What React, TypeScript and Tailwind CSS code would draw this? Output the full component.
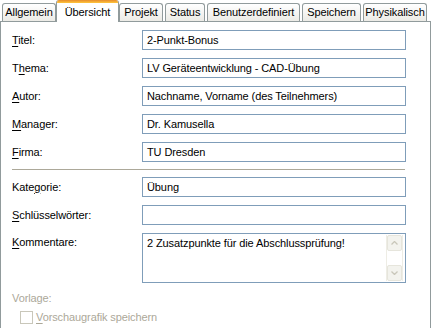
import React from 'react';

const tabs = [
  { label: 'Allgemein', w: 'w-[54px]' },
  { label: 'Übersicht', w: 'w-[63px]', active: true },
  { label: 'Projekt', w: 'w-[44px]' },
  { label: 'Status', w: 'w-[40px]' },
  { label: 'Benutzerdefiniert', w: 'w-[93px]' },
  { label: 'Speichern', w: 'w-[59px]' },
  { label: 'Physikalisch', w: 'w-[64px]' },
];

function Label({ pre, u, post, disabled }: { pre?: string; u: string; post: string; disabled?: boolean }) {
  return (
    <span className={disabled ? 'text-[#aca899]' : 'text-black'}>
      {pre}
      <span className="underline underline-offset-2">{u}</span>
      {post}
    </span>
  );
}

function Field({ label, value }: { label: React.ReactNode; value: string }) {
  return (
    <div className="flex h-[20px] items-center leading-[13px]">
      <div className="w-[130px]">{label}</div>
      <div className="h-[20px] w-[264px] border border-[#7f9db9] bg-white pl-[4px] leading-[18px]">{value}</div>
    </div>
  );
}

export default function App() {
  return (
    <div
      className="w-[432px] h-[328px] overflow-hidden bg-white text-[11px] leading-[13px] tracking-[-0.1px] text-black"
      style={{ fontFamily: '"Liberation Sans", Arial, sans-serif' }}
    >
      {/* Tab strip */}
      <div className="flex items-end h-[21px] pl-[2px] gap-[2px] relative z-10">
        {tabs.map((t) =>
          t.active ? (
            <div
              key={t.label}
              className={`${t.w} -mx-[2px] h-[22px] -mb-px bg-white border-x border-[#919b9c] rounded-t-[3px] overflow-hidden flex flex-col`}
            >
              <div className="h-[3px] bg-gradient-to-b from-[#e68b2c] to-[#ffc73c] shrink-0" />
              <div className="flex-1 text-center leading-[16px] pt-px">{t.label}</div>
            </div>
          ) : (
            <div
              key={t.label}
              className={`${t.w} h-[18px] border border-b-0 border-[#919b9c] rounded-t-[3px] bg-gradient-to-b from-white to-[#ecebe6] text-center leading-[17px]`}
            >
              {t.label}
            </div>
          )
        )}
      </div>

      {/* Panel */}
      <div className="h-[307px] w-[431px] border border-[#919b9c] border-b-0 bg-white pl-[11px] pt-[8px]">
        <div className="flex flex-col gap-[8px]">
          <Field label={<Label u="T" post="itel:" />} value="2-Punkt-Bonus" />
          <Field label={<Label pre="T" u="h" post="ema:" />} value="LV Geräteentwicklung - CAD-Übung" />
          <Field label={<Label u="A" post="utor:" />} value="Nachname, Vorname (des Teilnehmers)" />
          <Field label={<Label u="M" post="anager:" />} value="Dr. Kamusella" />
          <Field label={<Label u="F" post="irma:" />} value="TU Dresden" />
        </div>

        <div className="h-px w-[393px] bg-[#aca899] mt-[7px] mb-[7px]" />

        <div className="flex flex-col gap-[8px]">
          <Field label={<Label pre="Kate" u="g" post="orie:" />} value="Übung" />
          <Field label={<Label u="S" post="chlüsselwörter:" />} value="" />
          <div className="flex">
            <div className="w-[130px] pt-[3px]">
              <Label u="K" post="ommentare:" />
            </div>
            <div className="h-[50px] w-[264px] border border-[#7f9db9] bg-white flex">
              <div className="flex-1 pl-[4px] pt-[3px]">2 Zusatzpunkte für die Abschlussprüfung!</div>
              <div className="w-[17px] mr-[2px] my-[1px] border-x border-[#eeede5] flex flex-col justify-between">
                <div className="h-[16px] bg-[#f3f3ee] border border-[#e6e5dc] rounded-[2px] flex items-center justify-center">
                  <svg width="7" height="4" viewBox="0 0 7 4">
                    <path d="M0.5 3.5 L3.5 0.5 L6.5 3.5" fill="none" stroke="#c9c7ba" strokeWidth="1.3" />
                  </svg>
                </div>
                <div className="h-[16px] bg-[#f3f3ee] border border-[#e6e5dc] rounded-[2px] flex items-center justify-center">
                  <svg width="7" height="4" viewBox="0 0 7 4">
                    <path d="M0.5 0.5 L3.5 3.5 L6.5 0.5" fill="none" stroke="#c9c7ba" strokeWidth="1.3" />
                  </svg>
                </div>
              </div>
            </div>
          </div>
        </div>

        <div className="mt-[9px] text-[#aca899]">Vorlage:</div>
        <div className="mt-[6px] ml-[8px] flex items-center gap-[3px] h-[13px]">
          <div className="w-[13px] h-[13px] border border-[#c9c7ba] bg-white" />
          <Label disabled u="V" post="orschaugrafik speichern" />
        </div>
      </div>
    </div>
  );
}
